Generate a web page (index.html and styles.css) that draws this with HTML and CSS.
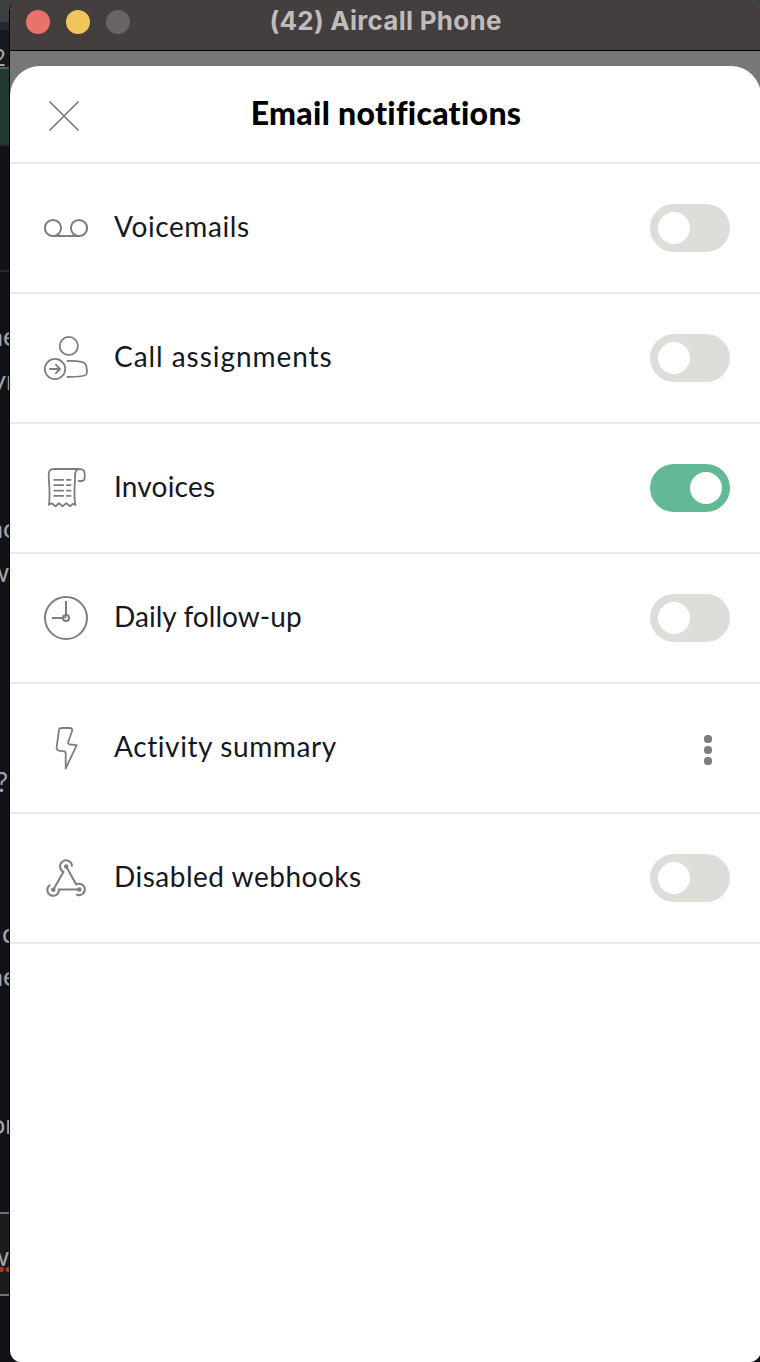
FILE: index.html
```html
<!DOCTYPE html>
<html lang="en">
<head>
    <meta charset="UTF-8">
    <meta name="viewport" content="width=device-width, initial-scale=1.0">
    <title>Email notifications</title>
    <link rel="stylesheet" href="styles.css">
</head>
<body>
    <div class="desktop">
        <!-- window behind the phone -->
        <div class="behind">
            <div class="behind-top"></div>
            <div class="behind-green"></div>
            <div class="behind-rule"></div>
            <div class="behind-input"></div>
            <span class="scrap s1">2</span>
            <span class="scrap s2">ne</span>
            <span class="scrap s3">yn</span>
            <span class="scrap s4">no</span>
            <span class="scrap s5">w</span>
            <span class="scrap s6">?</span>
            <span class="scrap s7">c</span>
            <span class="scrap s8">ne</span>
            <span class="scrap s9">on</span>
            <span class="scrap s10">w</span>
            <div class="spelling"></div>
        </div>

        <div class="window">
            <div class="titlebar">
                <div class="lights">
                    <span class="light red"></span>
                    <span class="light yellow"></span>
                    <span class="light grey"></span>
                </div>
                <span class="app-name">(42) Aircall Phone</span>
            </div>

            <div class="sheet">
                <div class="header">
                    <svg class="close" width="32" height="32" viewBox="0 0 32 32"><path d="M1.5 1.5l29 29M30.5 1.5l-29 29"/></svg>
                    <h1 class="title">Email notifications</h1>
                </div>

                <div class="row">
                    <svg class="icon" viewBox="0 0 44 44">
                        <circle cx="9" cy="22" r="8.1"/><circle cx="35" cy="22" r="8.1"/><path d="M9 30.1h26"/>
                    </svg>
                    <span class="label voicemails">Voicemails</span>
                    <span class="toggle"></span>
                </div>
                <div class="row">
                    <svg class="icon thin" viewBox="0 0 44 44">
                        <circle cx="24.8" cy="10" r="9.1"/>
                        <circle cx="11" cy="33" r="10.2"/>
                        <path d="M6 33h10M11.800 28.700L16 33l-4.200 4.300"/>
                        <path d="M23.500 25C29 24.700 33.500 25.100 38.500 26.100C41.500 26.800 42.100 28.300 42.600 31.500C43.200 36 43.600 38.500 40.500 39.500C36 40.800 29.500 40.800 23.500 41"/>
                    </svg>
                    <span class="label calls">Call assignments</span>
                    <span class="toggle"></span>
                </div>
                <div class="row">
                    <svg class="icon thin" viewBox="0 0 44 44">
                        <path d="M36 3H10C6 3 4.600 5 4.700 9.500C5 20 6.500 29 4.900 38.800L7.700 37.200L11.500 40.200L15 37.200L18.500 40.200L22.300 37.200L26 40.200L29 37.800L31.400 39C29.300 30 31 22 31 10C31 6 32 3.300 35.500 3.200C39.500 3 40.700 5 40.700 8.500V11.500C40.700 14 39.500 15 37.500 15H34.700"/>
                        <path d="M10.200 13.800h9M22.800 13.800h3.800M10.200 19.100h9M22.800 19.100h3.800M10.200 24.600h9M22.800 24.600h3.800M10.200 29.900h9M22.800 29.900h3.800"/>
                    </svg>
                    <span class="label invoices">Invoices</span>
                    <span class="toggle on"></span>
                </div>
                <div class="row">
                    <svg class="icon" viewBox="0 0 44 44">
                        <circle cx="22" cy="22" r="21"/><circle cx="22" cy="22" r="3"/><path class="butt" d="M22 5v14M8 22h11M22 22l-1.500-1.500"/>
                    </svg>
                    <span class="label daily">Daily follow-up</span>
                    <span class="toggle"></span>
                </div>
                <div class="row">
                    <svg class="icon thin" viewBox="0 0 44 44">
                        <path d="M17.200 2H25.500C27.700 2 28.700 3.300 28 5.200L24.300 15.700C23.700 17.600 24.500 18.300 26.300 18.500L32.700 19.200L21.700 42.500V27.500C21.700 25.800 20.900 25.300 19.300 25.200L15.500 24.800C13 24.500 12.400 23.100 12.700 20.800L15 4C15.200 2.600 15.800 2 17.200 2Z"/>
                    </svg>
                    <span class="label activity">Activity summary</span>
                    <span class="dots"><i></i><i></i><i></i></span>
                </div>
                <div class="row">
                    <svg class="icon" viewBox="0 0 44 44">
                        <path d="M19.500 15.800A6 6 0 1 1 28 9.800M9.300 33.800L19.500 15.800"/>
                        <path d="M22.200 10.500L32.200 28.500A5.700 5.700 0 1 1 33 38.700"/>
                        <path d="M5.700 29.300A5.800 5.800 0 1 0 14.900 33.500H35.300"/>
                        <circle class="node" cx="22.200" cy="10.500" r="2.300"/><circle class="node" cx="9.300" cy="33.800" r="2.300"/><circle class="node" cx="35.300" cy="33.500" r="2.300"/>
                    </svg>
                    <span class="label webhooks">Disabled webhooks</span>
                    <span class="toggle"></span>
                </div>
            </div>
        </div>
    </div>
</body>
</html>
```
FILE: styles.css
```css
body {
    margin: 0;
    background: #111318;
    font-family: Lato, sans-serif;
}
.desktop {
    display: flex;
    width: 760px;
    height: 1362px;
    overflow: hidden;
    background: linear-gradient(#3c4043 0 22px, #25272c 22px 30px, #17191e 30px 67px, #111318 67px);
}
.behind {
    position: relative;
    flex: 0 0 9px;
    overflow: hidden;
    display: flex;
    flex-direction: column;
}
.behind-top {
    height: 67px;
    border-bottom: 2px solid #4d625a;
}
.behind-green {
    height: 75px;
    background: #1f3b31;
    border-bottom: 2px solid #292b30;
}
.behind-rule {
    height: 2px;
    margin-top: 124px;
    background: #292b30;
}
.behind-input {
    height: 80px;
    margin-top: 940px;
    background: #1a1d20;
    border-top: 2px solid #707274;
    border-bottom: 2px solid #707274;
}
.scrap {
    position: absolute;
    font-size: 27px;
    line-height: 32px;
    color: #a3a5a7;
    white-space: nowrap;
}
.s1 { left: -8px; top: 41px; font-size: 24px; }
.s2 { left: -12px; top: 320px; }
.s3 { left: -8px; top: 364px; }
.s4 { left: -12px; top: 512px; }
.s5 { left: -12px; top: 556px; }
.s6 { left: -4px; top: 766px; }
.s7 { left: 2px; top: 917px; }
.s8 { left: -12px; top: 960px; }
.s9 { left: -10px; top: 1108px; }
.s10 { left: -12px; top: 1240px; }
.spelling {
    position: absolute;
    left: 0;
    top: 1267px;
    width: 9px;
    height: 5px;
    background: radial-gradient(circle at 1px 2.5px, #aa3728 2.5px, transparent 3px), radial-gradient(circle at 8px 2.5px, #aa3728 2px, transparent 3px);
}
.window {
    flex: 0 0 752px;
    box-sizing: border-box;
    border-left: 1px solid #000;
    border-radius: 12px;
    overflow: hidden;
    background: #777;
    display: flex;
    flex-direction: column;
}
.titlebar {
    flex: 0 0 50px;
    display: grid;
    align-items: start;
    background: #443f3e;
    border-bottom: 1px solid #000;
}
.lights {
    grid-area: 1 / 1;
    display: flex;
    gap: 16px;
    padding: 10px 16px;
}
.light {
    width: 24px;
    height: 24px;
    border-radius: 50%;
}
.red { background: #e9736a; }
.yellow { background: #f2c55c; }
.grey { background: #686564; }
.app-name {
    grid-area: 1 / 1;
    justify-self: center;
    padding-top: 5px;
    font: 700 26px/32px Inter, sans-serif;
    letter-spacing: 0.25px;
    color: #bfbcbb;
}
.sheet {
    flex: 1;
    margin-top: 15px;
    background: #fff;
    border-radius: 30px 30px 0 0;
}
.header {
    display: grid;
    align-items: center;
    height: 96px;
    border-bottom: 2px solid #eaeaea;
}
.close {
    grid-area: 1 / 1;
    margin: 3px 0 0 38px;
    stroke: #7b7c80;
    stroke-width: 1.7;
}
.title {
    grid-area: 1 / 1;
    justify-self: center;
    margin: 0;
    padding: 0 0 2px 1px;
    font-size: 32px;
    line-height: 40px;
    font-weight: 900;
    letter-spacing: 0.3px;
    color: #000;
}
.row {
    display: flex;
    align-items: center;
    height: 128px;
    padding: 0 31px 0 34px;
    border-bottom: 2px solid #eaeaea;
}
.icon {
    width: 44px;
    height: 44px;
    margin-right: 26px;
    fill: none;
    stroke: #7d7e82;
    stroke-width: 2;
    stroke-linecap: round;
    stroke-linejoin: round;
}
.thin { stroke-width: 1.8; }
.butt { stroke-linecap: butt; }
.node { fill: #7d7e82; stroke: none; }
.label {
    flex: 1;
    padding-bottom: 5px;
    font-size: 28px;
    line-height: 34px;
    color: #141824;
}
.voicemails { letter-spacing: 0.6px; }
.calls { letter-spacing: 0.95px; }
.invoices { letter-spacing: 0.2px; }
.daily { letter-spacing: 0.05px; }
.activity { letter-spacing: 0.6px; }
.webhooks { letter-spacing: 0.5px; }
.toggle {
    box-sizing: border-box;
    display: flex;
    width: 80px;
    height: 48px;
    padding: 8px;
    border-radius: 24px;
    background: #dddeda;
}
.toggle::before {
    content: "";
    width: 32px;
    height: 32px;
    border-radius: 50%;
    background: #fff;
}
.toggle.on {
    justify-content: flex-end;
    background: #62b996;
}
.dots {
    display: flex;
    flex-direction: column;
    gap: 3px;
    margin: 3px 18px 0 0;
}
.dots i {
    width: 8px;
    height: 8px;
    border-radius: 3.5px;
    background: #7d7e82;
}
```
